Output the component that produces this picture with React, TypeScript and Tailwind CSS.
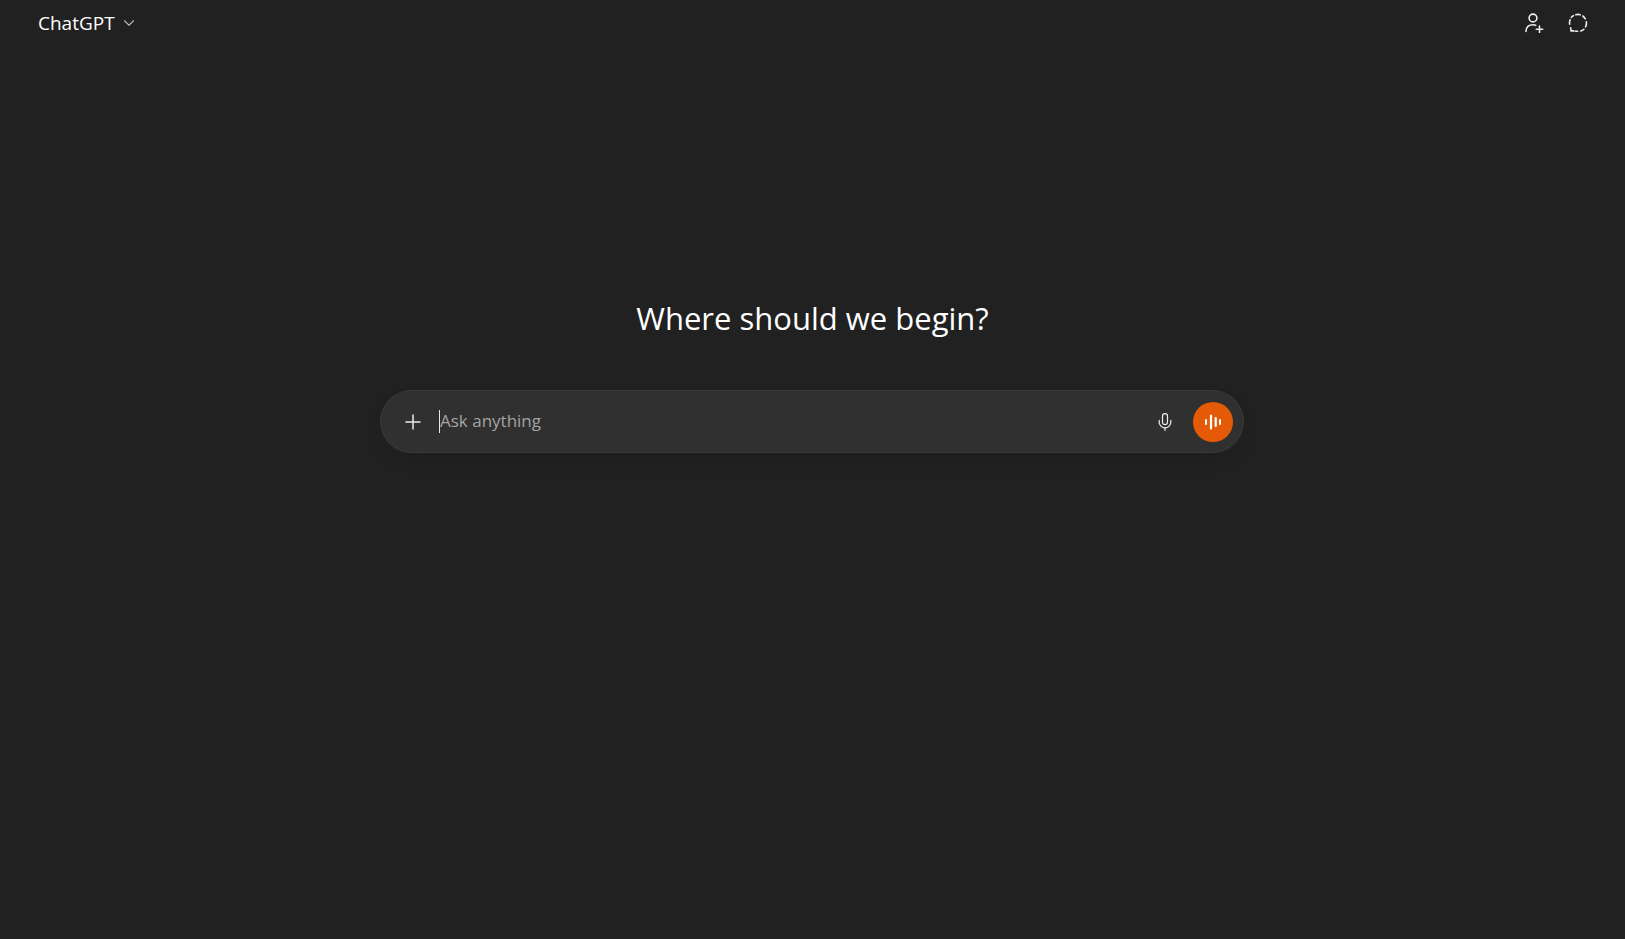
import { ChevronDown, Mic, Plus } from "lucide-react"

function DashedCircle() {
  return (
    <svg width="20" height="20" viewBox="0 0 20 20" fill="none" stroke="currentColor" strokeWidth="1.6" strokeLinecap="round">
      <path d="M7.800 1.700a8.500 8.500 0 0 1 4.400 0" />
      <path d="M14.800 3a8.500 8.500 0 0 1 2.500 2.900" />
      <path d="M18.400 8.800a8.500 8.500 0 0 1-.8 5" />
      <path d="M15.800 16.300a8.500 8.500 0 0 1-3 1.700" />
      <path d="M9.700 18.300H7.300" />
      <path d="M2.600 14.900l.5 3h2.700" />
      <path d="M1.600 11.200a8.500 8.500 0 0 1 .5-4.500" />
      <path d="M3.400 4.300a8.500 8.500 0 0 1 2-1.700" />
    </svg>
  )
}

function AddPerson() {
  return (
    <svg width="20" height="20" viewBox="0 0 20 20" fill="none" stroke="currentColor" strokeWidth="1.6" strokeLinecap="round">
      <circle cx="9" cy="5" r="3.900" />
      <path d="M1.900 18.500c.3-4.300 3.200-6.700 7.100-6.700 1 0 1.900.2 2.700.5" />
      <path d="M15.500 13v6.400M12.300 16.200h6.400" />
    </svg>
  )
}

function VoiceBars() {
  return (
    <svg width="20" height="20" viewBox="0 0 20 20" fill="white">
      <rect x="2" y="7" width="2" height="6" rx="1" />
      <rect x="6.900" y="2.500" width="2.200" height="15" rx="1.100" />
      <rect x="11.600" y="5" width="2.200" height="10" rx="1.100" />
      <rect x="16" y="7" width="2" height="6" rx="1" />
    </svg>
  )
}

export default function App() {
  return (
    <div className="flex h-[939px] w-full flex-col overflow-hidden bg-[#212121] font-['Open_Sans','Noto_Sans',sans-serif] text-white">
      <header className="flex h-[46px] items-center justify-between pl-[38px] pr-[37px]">
        <div className="flex items-center gap-[5px]">
          <span className="text-[19px] leading-6">ChatGPT</span>
          <ChevronDown size={18} strokeWidth={1.5} className="text-[#b4b4b4]" />
        </div>
        <div className="flex items-center gap-6 text-[#ececec]">
          <AddPerson />
          <DashedCircle />
        </div>
      </header>
      <main className="flex flex-col items-center pt-[247px]">
        <h1 className="text-[31px] leading-[50px] font-normal">Where should we begin?</h1>
        <div className="mt-[47px] mr-[1px] flex h-[63px] w-[864px] items-center rounded-[32px] border border-[#3a3a3a] bg-[#303030] pr-[10px] pl-[20px] shadow-[0_8px_16px_rgba(0,0,0,0.08)]">
          <Plus size={24} strokeWidth={1.5} className="text-[#ececec]" />
          <div className="ml-[14px] h-[23px] w-px bg-[#e8e8e8]" />
          <span className="-mt-[2px] text-[17px] text-[#a3a3a3]">Ask anything</span>
          <Mic size={20} strokeWidth={1.5} className="ml-auto text-[#ececec]" />
          <div className="ml-[18px] flex h-10 w-10 items-center justify-center rounded-full bg-[#e55a07]">
            <VoiceBars />
          </div>
        </div>
      </main>
    </div>
  )
}
